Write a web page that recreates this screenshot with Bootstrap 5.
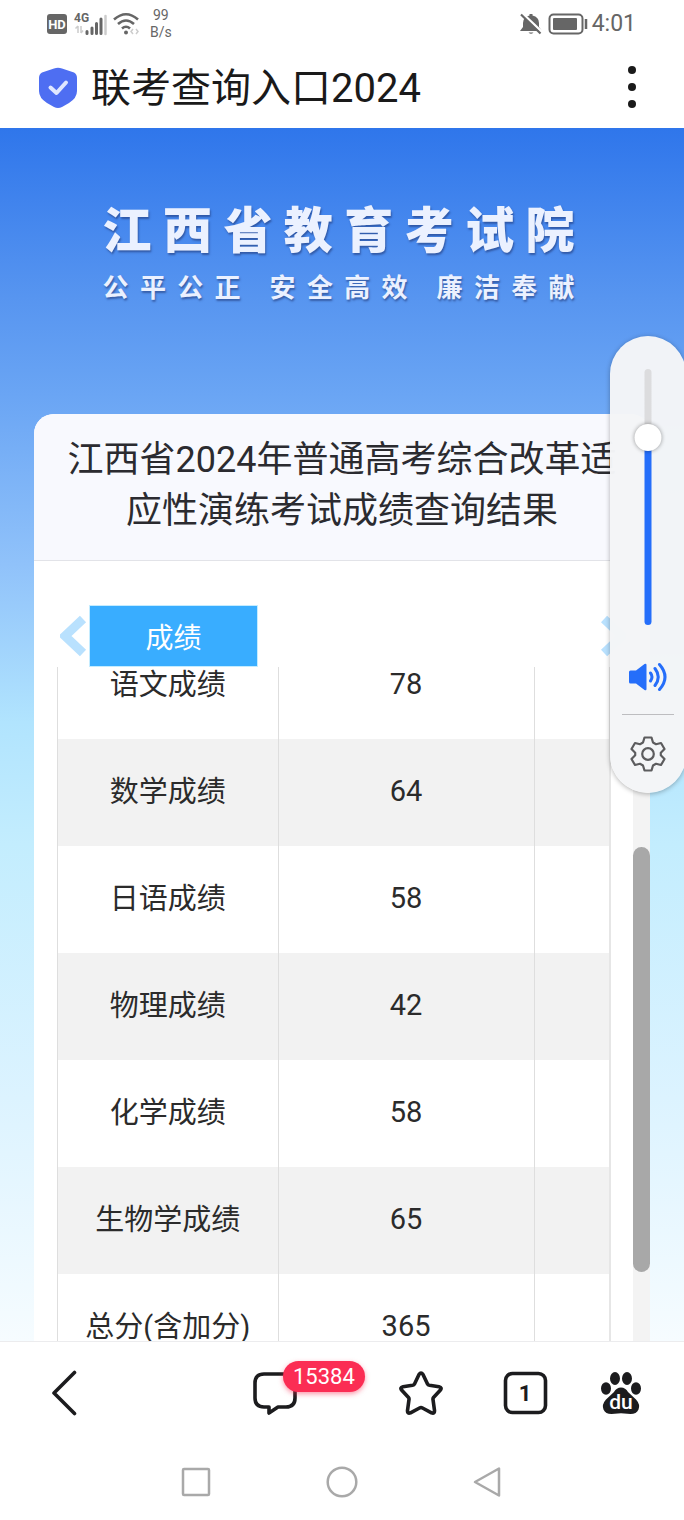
<!DOCTYPE html>
<html lang="zh-CN">
<head>
<meta charset="utf-8">
<meta name="viewport" content="width=device-width, initial-scale=1">
<title>联考查询入口2024</title>
<link href="https://cdn.jsdelivr.net/npm/bootstrap@5.3.0/dist/css/bootstrap.min.css" rel="stylesheet">
<style>
  body { font-family: Roboto, "Noto Sans CJK SC", sans-serif; color: #2b2b30; background: #fff; }
  svg { display: block; flex: none; }
  .plain { background: none; border: 0; padding: 0; color: inherit; }

  .status { height: 48px; padding: 0 48px 0 46px; color: #666; }
  .net-speed { font-size: 14px; line-height: 17px; margin-left: 10px; }
  .clock { font-size: 23px; line-height: 28px; }
  .app-bar { height: 80px; padding: 0 46px 0 38px; color: #1a1a1a; }
  .app-title { font-size: 40px; line-height: 48px; padding: 2px 0 0 12px; }

  .page { background: linear-gradient(#2f76eb 0%, #5795f0 14%, #6aa5f4 22%, #90c2fa 36%, #b1e4fe 49%, #c3edfe 59%, #dcf3ff 80%, #f6fcff 100%); }
  .banner { height: 286px; padding: 68px 16% 0 15%; color: #ebf1ff; text-shadow: 1px 2px 2px rgba(30, 50, 110, .55); }
  .banner-name { font-size: 49px; line-height: 72px; font-weight: 900; text-align-last: justify; }
  .banner-motto { font-size: 26px; line-height: 40px; font-weight: 700; text-align-last: justify; }

  .result { margin: 0 34px; border-radius: 20px 20px 0 0; background: #fff; }
  .result-head { background: #f8f9fe; border-bottom: 1px solid #e2e3e8; padding: 21px 24px 23px; }
  .result-title { font-size: 36px; line-height: 51px; }
  .tab-row { padding: 44px 7px 0 26px; }
  .score-tab { width: 169px; height: 62px; padding: 5px 0 0; font-size: 28px; line-height: 40px; color: #fff; background: #39adff; border: 1px solid #c4ecff; }
  .score-box { margin: 0 22px 0 23px; border-right: 2px solid #e6e6e6; }
  .score-table { table-layout: fixed; margin-top: -35px; font-size: 29px; line-height: 30px; color: #2b2b2b; }
  .score-table th, .score-table td { height: 107px; padding: 0 0 2px; font-weight: 400; text-align: center; vertical-align: middle; border-left: 1px solid #dedede; }
  .score-table td { padding-bottom: 4px; }
  .score-table tr:nth-child(even) { background: #f2f2f2; }
  .col-name { width: 40%; }
  .col-rest { width: 75px; }
  .scroll-track { width: 17px; background: #f3f3f3; }
  .scroll-before { flex: 286; }
  .scroll-thumb { flex: 425; background: #a8a8a8; border-radius: 9px; }
  .scroll-after { flex: 69; }

  .volume { top: 208px; right: -2px; width: 76px; height: 457px; padding: 33px 0 21px; border-radius: 38px; background: rgba(244, 245, 247, .98); box-shadow: 0 1px 5px rgba(0, 0, 0, .3); }
  .slider-box { width: 27px; height: 256px; }
  .slider { appearance: none; -webkit-appearance: none; position: absolute; top: 50%; left: 50%; width: 256px; height: 27px; margin: 0; background: none; transform: translate(-50%, -50%) rotate(-90deg); }
  .slider::-webkit-slider-runnable-track { height: 7px; border-radius: 4px; background: linear-gradient(90deg, #256efa 73%, #dcdcde 73%); }
  .slider::-webkit-slider-thumb { -webkit-appearance: none; width: 27px; height: 27px; margin-top: -10px; border: 0; border-radius: 50%; background: #fff; box-shadow: 0 0 4px rgba(0, 0, 0, .4); }
  .volume-line { width: 52px; height: 1px; background: #bdbdc0; }

  .tools { display: grid; grid-template-columns: 211fr 146fr 104fr 96fr 44px; height: 103px; padding: 0 41px 0 42px; border-top: 1px solid #ececee; color: #1c1c1e; }
  .msg-count { top: -10px; left: 30px; padding: 0 10px; font-size: 22px; line-height: 31px; color: #fff; background: #fb2d54; border-radius: 16px; box-shadow: 0 2px 5px rgba(251, 45, 84, .5); }
  .sys-nav { height: 76px; gap: 114px; }
</style>
</head>
<body class="d-flex flex-column vh-100 overflow-hidden">

<header class="flex-shrink-0">
  <div class="status d-flex align-items-center justify-content-between">
    <div class="d-flex align-items-center">
      <svg width="22" height="22" viewBox="0 0 22 22"><rect x="1" y="1" width="20" height="20" rx="3" fill="#666"/><text x="11" y="16" text-anchor="middle" font-size="13" font-weight="700" fill="#fff">HD</text></svg>
      <svg class="ms-1" width="36" height="28" viewBox="0 0 36 28"><text x="2" y="12" font-size="12" font-weight="700" fill="#666">4G</text><path d="M6 16v7M3.500 18.500l2.500-2.500M9 23v-7M11 20.500l-2 2.500" stroke="#ccc" stroke-width="1.500" fill="none"/><path d="M15 21.500v2M20 18v5.500M24.500 13.500v10M29 9v14.500" stroke="#666" stroke-width="3" stroke-linecap="round"/><path d="M33.500 6v18" stroke="#ccc" stroke-width="2.500" stroke-linecap="round"/></svg>
      <svg class="ms-1" width="28" height="24" viewBox="0 0 28 24" fill="none" stroke="#666" stroke-width="2.600"><path d="M2 7.500Q14-3 26 7.500M6 12q8-7 16 0M10 16.500q4-3.500 8 0"/><circle cx="14" cy="20.500" r="2" fill="#666" stroke="none"/><path d="M21 17l-2 2.500 2 2.500M24 17l2 2.500-2 2.500" stroke="#ccc" stroke-width="1.500"/></svg>
      <div class="net-speed text-center">99<br>B/s</div>
    </div>
    <div class="d-flex align-items-center">
      <svg width="22" height="22" viewBox="0 0 22 22"><path d="M9.500 2.500V1h3v1.500Q19 4 19 10v4l3 4H0l3-4v-4Q3 4 9.500 2.500zM8.500 19.500h5q-2.500 2.500-5 0" fill="#666"/><path d="M2 0l20 19" stroke="#fff" stroke-width="2.500"/><path d="M1 1.500l19.500 19" stroke="#666" stroke-width="2.200"/></svg>
      <svg class="ms-1" width="46" height="22" viewBox="0 0 46 22"><rect x="3.500" y="1.500" width="33" height="19" rx="4" fill="none" stroke="#666" stroke-width="2"/><rect x="7" y="5" width="24" height="12" rx="1" fill="#666"/><path d="M40 6v10" stroke="#666" stroke-width="2.500"/></svg>
      <span class="clock">4:01</span>
    </div>
  </div>
  <div class="app-bar d-flex align-items-center">
    <svg width="41" height="42" viewBox="0 0 41 42"><path d="M16 1.500q4-1.500 8 0l12 4Q39 7 39 11v13q0 7-8 12l-7 4q-4 2-8 0l-7-4q-8-5-8-12V11q0-4 3-5.500z" fill="#4e6ef2"/><path d="M12.500 20.500l6 5.500L28 15.500" fill="none" stroke="#dfe7ff" stroke-width="4" stroke-linecap="round" stroke-linejoin="round"/></svg>
    <h1 class="app-title fw-normal mb-0 flex-grow-1">联考查询入口2024</h1>
    <button class="plain" type="button" aria-label="更多"><svg width="12" height="44" viewBox="0 0 12 44" fill="#1a1a1a"><circle cx="6" cy="4" r="4"/><circle cx="6" cy="21" r="4"/><circle cx="6" cy="38" r="4"/></svg></button>
  </div>
</header>

<main class="page flex-fill position-relative overflow-hidden d-flex flex-column">
  <div class="banner flex-shrink-0">
    <div class="banner-name">江西省教育考试院</div>
    <div class="banner-motto">公平公正 安全高效 廉洁奉献</div>
  </div>

  <section class="result flex-fill d-flex flex-column overflow-hidden">
    <div class="result-head">
      <h2 class="result-title fw-normal text-center mb-0">江西省2024年普通高考综合改革适应性演练考试成绩查询结果</h2>
    </div>
    <div class="d-flex flex-fill overflow-hidden">
      <div class="flex-fill d-flex flex-column overflow-hidden">
        <div class="tab-row d-flex align-items-center">
          <button class="plain" type="button" aria-label="上一项"><svg width="29" height="42" viewBox="0 0 29 42"><path d="M23 4L5 21l18 17" fill="none" stroke="#b9e1fe" stroke-width="9"/></svg></button>
          <button class="score-tab" type="button">成绩</button>
          <button class="plain ms-auto" type="button" aria-label="下一项"><svg width="25" height="42" viewBox="0 0 25 42"><path d="M3 4L21 21 3 38" fill="none" stroke="#b9e1fe" stroke-width="9"/></svg></button>
        </div>
        <div class="score-box flex-fill overflow-hidden">
          <table class="score-table w-100">
            <colgroup><col class="col-name"><col><col class="col-rest"></colgroup>
            <tbody>
              <tr><th scope="row">语文成绩</th><td>78</td><td></td></tr>
              <tr><th scope="row">数学成绩</th><td>64</td><td></td></tr>
              <tr><th scope="row">日语成绩</th><td>58</td><td></td></tr>
              <tr><th scope="row">物理成绩</th><td>42</td><td></td></tr>
              <tr><th scope="row">化学成绩</th><td>58</td><td></td></tr>
              <tr><th scope="row">生物学成绩</th><td>65</td><td></td></tr>
              <tr><th scope="row">总分(含加分)</th><td>365</td><td></td></tr>
            </tbody>
          </table>
        </div>
      </div>
      <div class="scroll-track d-flex flex-column flex-shrink-0">
        <div class="scroll-before"></div>
        <div class="scroll-thumb"></div>
        <div class="scroll-after"></div>
      </div>
    </div>
  </section>

  <aside class="volume position-absolute d-flex flex-column align-items-center justify-content-between">
    <div class="slider-box position-relative"><input class="slider" type="range" min="0" max="100" value="76" aria-label="音量"></div>
    <svg class="mt-3" width="40" height="30" viewBox="0 0 40 30"><path d="M2.500 8.500H8L16.500 2q2-1 2 1v24q0 2-2 1L8 21.500H2.500q-1.500 0-1.500-1.500V10q0-1.500 1.500-1.500z" fill="#256efa"/><path d="M22.500 11q3 4 0 8M27 6.500q6.500 8.500 0 17M31.500 2.500q11 12.500 0 25" fill="none" stroke="#256efa" stroke-width="3" stroke-linecap="round"/></svg>
    <div class="volume-line"></div>
    <button class="plain" type="button" aria-label="声音设置"><svg width="36" height="36" viewBox="0 0 36 36" fill="none" stroke="#5c5c5e" stroke-width="2.200" stroke-linejoin="round"><path d="M14.500 1.500h7l1.500 5 3 1.700 5-1.200 3.500 6-3.700 3.700v2.600l3.700 3.700-3.500 6-5-1.200-3 1.700-1.500 5h-7l-1.500-5-3-1.700-5 1.200-3.500-6 3.700-3.700v-2.600L1.500 13 5 7l5 1.200 3-1.700z"/><circle cx="18" cy="18" r="5.800"/></svg></button>
  </aside>
</main>

<footer class="flex-shrink-0">
  <nav class="tools align-items-center">
    <button class="plain text-start" type="button" aria-label="后退"><svg width="44" height="46" viewBox="0 0 44 46"><path d="M32.500 2.500L12 23l20.500 20.500" fill="none" stroke="currentColor" stroke-width="3.600" stroke-linecap="round" stroke-linejoin="round"/></svg></button>
    <div class="d-flex"><button class="plain position-relative" type="button" aria-label="评论"><svg width="44" height="44" viewBox="0 0 44 44"><path d="M11 3h22q9 0 9 9v15q0 9-9 9h-8l-9 6v-6h-5q-9 0-9-9V12q0-9 9-9z" fill="none" stroke="currentColor" stroke-width="3.600" stroke-linejoin="round"/></svg><span class="msg-count position-absolute">15384</span></button></div>
    <button class="plain" type="button" aria-label="收藏"><svg width="44" height="44" viewBox="0 0 44 44"><path d="M20 3.500q2-3 4 0l4.500 9.500q.5 1 2 1.300l9.500 1.400q3.500.8 1.200 3.600L34.500 26.500q-.7.800-.5 2l1.500 11q.2 3.500-3 2.300L23.500 37q-1.500-.8-3 0l-9 4.800q-3.200 1.200-3-2.300l1.500-11q.2-1.200-.5-2L2.800 19.300Q.5 16.500 4 15.700l9.500-1.400q1.500-.3 2-1.300z" fill="none" stroke="currentColor" stroke-width="3.600" stroke-linejoin="round"/></svg></button>
    <button class="plain" type="button" aria-label="标签页"><svg width="45" height="44" viewBox="0 0 45 44"><rect x="2.500" y="2.500" width="40" height="39" rx="7" fill="none" stroke="currentColor" stroke-width="3.600"/><text x="22" y="30" text-anchor="middle" font-size="22" font-weight="700" fill="currentColor">1</text></svg></button>
    <button class="plain" type="button" aria-label="百度首页"><svg width="44" height="44" viewBox="0 0 44 44" fill="currentColor"><ellipse cx="7" cy="17.500" rx="5" ry="6.200"/><ellipse cx="16" cy="7.500" rx="5" ry="6.500"/><ellipse cx="28" cy="7.500" rx="5" ry="6.500"/><ellipse cx="37" cy="17.500" rx="5" ry="6.200"/><path d="M22 16.500q4.500 0 7 4.500l8 7.500q4.500 5 2.500 10-2 4.500-8 4.500l-9.500-.8-9.500.8q-6 0-8-4.500-2-5 2.500-10l8-7.500q2.500-4.500 7-4.500z"/><text x="22" y="38" text-anchor="middle" font-size="21" font-weight="500" fill="#fff">du</text></svg></button>
  </nav>
  <nav class="sys-nav d-flex align-items-center justify-content-center">
    <button class="plain" type="button" aria-label="最近任务"><svg width="32" height="32" viewBox="0 0 32 32"><rect x="3" y="3" width="26" height="26" rx="1" fill="none" stroke="#a9a9a9" stroke-width="2.500"/></svg></button>
    <button class="plain" type="button" aria-label="主屏幕"><svg width="32" height="32" viewBox="0 0 32 32"><circle cx="16" cy="16" r="14.300" fill="none" stroke="#a9a9a9" stroke-width="2.500"/></svg></button>
    <button class="plain" type="button" aria-label="返回"><svg width="32" height="32" viewBox="0 0 32 32"><path d="M27 2.500v27L3 16z" fill="none" stroke="#a9a9a9" stroke-width="2.500" stroke-linejoin="round"/></svg></button>
  </nav>
</footer>

<script src="https://cdn.jsdelivr.net/npm/bootstrap@5.3.0/dist/js/bootstrap.bundle.min.js"></script>
</body>
</html>
